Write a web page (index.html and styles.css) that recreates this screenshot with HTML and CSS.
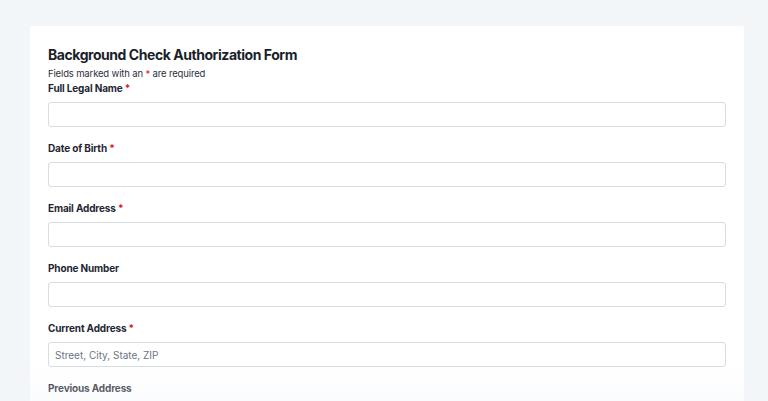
FILE: index.html
```html
<!DOCTYPE html>
<html lang="en">
<head>
<meta charset="utf-8">
<title>Background Check Authorization Form</title>
<link rel="stylesheet" href="styles.css">
</head>
<body>
<main class="page">
  <form class="card">
    <h1 class="title">Background Check Authorization Form</h1>
    <p class="note">Fields marked with an <span class="req">*</span> are required</p>
    <div class="field">
      <label class="label">Full Legal Name <span class="req">*</span></label>
      <input class="input" type="text">
    </div>
    <div class="field">
      <label class="label">Date of Birth <span class="req">*</span></label>
      <input class="input" type="text">
    </div>
    <div class="field">
      <label class="label">Email Address <span class="req">*</span></label>
      <input class="input" type="text">
    </div>
    <div class="field">
      <label class="label">Phone Number</label>
      <input class="input" type="text">
    </div>
    <div class="field">
      <label class="label">Current Address <span class="req">*</span></label>
      <input class="input" type="text" placeholder="Street, City, State, ZIP">
    </div>
    <div class="field">
      <label class="label">Previous Address</label>
      <input class="input" type="text">
    </div>
  </form>
</main>
<div class="fade"></div>
</body>
</html>
```
FILE: styles.css
```css
* { box-sizing: border-box; }
html, body { margin: 0; padding: 0; }
body {
  background: #f3f6f9;
  font-family: Inter, "Liberation Sans", Arial, sans-serif;
  color: #1c2330;
  height: 401px;
  overflow: hidden;
}
.page {
  padding: 26px 24px 0 30px;
}
.card {
  width: 714px;
  background: #ffffff;
  border-radius: 3px;
  padding: 19px 18px 20px 18px;
}
.title {
  margin: 0;
  font-size: 14px;
  line-height: 20px;
  letter-spacing: -0.45px;
  font-weight: 700;
  color: #1a1f2b;
}
.note {
  margin: 1px 0 0 0;
  font-size: 9.5px;
  line-height: 15px;
  letter-spacing: -0.15px;
  color: #2a3140;
}
.req { color: #e0141e; }
.field {
  display: flex;
  flex-direction: column;
  gap: 6px;
  margin-bottom: 14px;
}
.label {
  font-size: 10px;
  line-height: 15px;
  letter-spacing: -0.15px;
  font-weight: 700;
  color: #1f2633;
}
.input {
  width: 100%;
  height: 25px;
  border: 1px solid #d6dce4;
  border-radius: 3px;
  padding: 0 6px;
  font-family: inherit;
  font-size: 10px;
  color: #1f2633;
  background: #fff;
}
.input::placeholder { color: #6b7585; }
.fade {
  position: fixed;
  left: 0;
  right: 0;
  bottom: 0;
  height: 36px;
  background: linear-gradient(rgba(243,246,249,0), rgba(243,246,249,0.4));
  pointer-events: none;
}
```
